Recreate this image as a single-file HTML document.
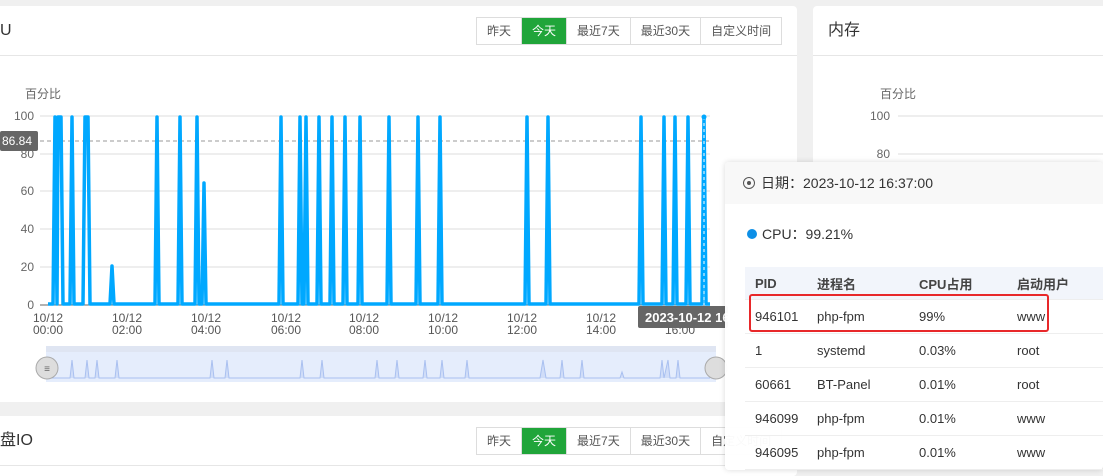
<!DOCTYPE html><html><head><meta charset="utf-8"><style>
body{margin:0;width:1103px;height:470px;background:#f0f0f0;font-family:"Liberation Sans","Noto Sans CJK SC",sans-serif;position:relative;overflow:hidden;color:#333}
.card{position:absolute;background:#fff;border-radius:4px}
.btns{position:absolute;display:flex;border:1px solid #ddd;height:26px;font-size:12px;color:#555}
.btns div{padding:0 10px;line-height:26px;border-left:1px solid #ddd}
.btns div:first-child{border-left:none}
.btns .on{background:#20a53a;color:#fff}
.t{position:absolute;font-size:16px;color:#333;line-height:20px}
.hr{position:absolute;height:1px;background:#e6e6e6}
.tip{position:absolute;left:725px;top:162px;width:378px;height:308px;background:rgba(255,255,255,.97);box-shadow:0 0 6px rgba(0,0,0,.15);border-radius:4px}
table{border-collapse:collapse;font-size:13px;color:#333;position:absolute;left:20px;top:105px;width:360px}
td,th{height:33px;padding:0 0 0 10px;text-align:left;border-bottom:1px solid #eee}
th{background:#f2f5fb;font-weight:bold;color:#444;height:32px}
</style></head><body>
<div class="card" style="left:-5px;top:6px;width:802px;height:396px"></div>
<div class="card" style="left:813px;top:6px;width:300px;height:396px"></div>
<div class="card" style="left:-5px;top:416px;width:802px;height:60px"></div>
<div class="t" style="left:0;top:21px">U</div>
<div class="hr" style="left:0;top:55px;width:797px"></div>
<div class="t" style="left:828px;top:21px">内存</div>
<div class="hr" style="left:813px;top:55px;width:290px"></div>
<div class="btns" style="left:476px;top:17px"><div>昨天</div><div class="on">今天</div><div>最近7天</div><div>最近30天</div><div>自定义时间</div></div>
<div class="t" style="left:0;top:431px">盘IO</div>
<div class="hr" style="left:0;top:465px;width:797px"></div>
<div class="btns" style="left:476px;top:427px"><div>昨天</div><div class="on">今天</div><div>最近7天</div><div>最近30天</div><div>自定义时间</div></div>
<svg style="position:absolute;left:0;top:0" width="1103" height="470" font-family="Liberation Sans,Noto Sans CJK SC,sans-serif" font-size="12" fill="#666">
<text x="25" y="98">百分比</text>
<g stroke="#ddd"><line x1="40" x2="710" y1="116" y2="116"/><line x1="40" x2="710" y1="154" y2="154"/><line x1="40" x2="710" y1="191" y2="191"/><line x1="40" x2="710" y1="229" y2="229"/><line x1="40" x2="710" y1="267" y2="267"/></g>
<line x1="40" x2="710" y1="305" y2="305" stroke="#666"/>
<g text-anchor="end"><text x="34" y="120">100</text><text x="34" y="158">80</text><text x="34" y="195">60</text><text x="34" y="233">40</text><text x="34" y="271">20</text><text x="34" y="309">0</text></g>
<line x1="40" x2="710" y1="141" y2="141" stroke="#999" stroke-dasharray="4,3"/>
<rect x="0" y="131" width="38" height="20" rx="2" fill="#666"/><text x="2" y="145" fill="#fff">86.84</text>
<g text-anchor="middle" fill="#555">
<text x="48" y="322">10/12</text><text x="48" y="334">00:00</text>
<text x="127" y="322">10/12</text><text x="127" y="334">02:00</text>
<text x="206" y="322">10/12</text><text x="206" y="334">04:00</text>
<text x="286" y="322">10/12</text><text x="286" y="334">06:00</text>
<text x="364" y="322">10/12</text><text x="364" y="334">08:00</text>
<text x="443" y="322">10/12</text><text x="443" y="334">10:00</text>
<text x="522" y="322">10/12</text><text x="522" y="334">12:00</text>
<text x="601" y="322">10/12</text><text x="601" y="334">14:00</text>
<text x="680" y="334">16:00</text></g>
<polyline fill="none" stroke="#00a8ff" stroke-width="3.5" stroke-linejoin="round" points="48,304 53,304 55,117 57,304 58,117 61,117 63,304 70,304 72,117 74,304 83,304 85,117 88,117 90,304 110,304 112,266 114,304 155,304 157,117 159,304 178,304 180,117 182,304 195,304 197,117 199,304 202,304 204,183 206,304 279,304 281,117 283,304 298,304 300,117 302,304 304,304 306,117 308,304 317,304 319,117 321,304 330,304 332,117 334,304 343,304 345,117 347,304 358,304 360,117 362,304 387,304 389,117 391,304 416,304 418,117 420,304 438,304 440,117 442,304 525,304 527,117 529,304 546,304 548,117 550,304 639,304 641,117 643,304 662,304 664,117 666,304 673,304 675,117 677,304 686,304 688,117 690,304 702,304 704,117 706,304 710,304"/>
<line x1="704" x2="704" y1="117" y2="305" stroke="#fff" stroke-dasharray="3,3"/>
<circle cx="704" cy="117" r="2.5" fill="#00a8ff"/>
<rect x="46" y="346" width="670" height="6" fill="#dfe5f2"/>
<rect x="46" y="352" width="670" height="30" fill="#e5edfc"/>
<polyline fill="#d0ddf8" stroke="#a9c0f0" points="50,378 70,378 72,360 74,378 85,378 87,360 89,378 95,378 97,360 99,378 115,378 117,360 119,378 210,378 212,360 214,378 225,378 227,360 229,378 300,378 302,360 304,378 320,378 322,360 324,378 375,378 377,360 379,378 395,378 397,360 399,378 423,378 425,360 427,378 440,378 442,360 444,378 465,378 467,360 469,378 540,378 543,360 546,378 560,378 562,360 564,378 580,378 582,360 584,378 620,378 622,372 624,378 660,378 662,360 664,378 668,360 670,378 676,378 678,360 680,378 710,378"/>
<circle cx="47" cy="368" r="11" fill="#ddd" stroke="#aaa"/><text x="47" y="372" text-anchor="middle" font-size="10">≡</text>
<circle cx="716" cy="368" r="11" fill="#ddd" stroke="#aaa"/>
<rect x="638" y="306" width="90" height="22" rx="2" fill="#666"/><text x="645" y="322" fill="#fff" font-weight="bold" font-size="13">2023-10-12 16:37</text>
<text x="880" y="98">百分比</text>
<text x="890" y="120" text-anchor="end">100</text><text x="890" y="158" text-anchor="end">80</text>
<line x1="898" x2="1103" y1="116" y2="116" stroke="#ddd"/><line x1="898" x2="1103" y1="154" y2="154" stroke="#ddd"/>
</svg>
<div class="tip">
<div style="height:42px;background:#f8f8f8;border-radius:4px 4px 0 0;font-size:14px;line-height:42px;padding-left:18px;color:#333"><span style="display:inline-block;width:10px;height:10px;border:1.5px solid #555;border-radius:50%;vertical-align:-1px;margin-right:6px;position:relative"><span style="position:absolute;left:3px;top:3px;width:4px;height:4px;background:#555;border-radius:50%"></span></span>日期：2023-10-12 16:37:00</div>
<div style="position:absolute;left:22px;top:62px;font-size:14px"><span style="display:inline-block;width:10px;height:10px;background:#0d8fe6;border-radius:50%;margin-right:5px"></span>CPU：99.21%</div>
<table>
<tr><th style="width:52px">PID</th><th style="width:92px">进程名</th><th style="width:88px">CPU占用</th><th>启动用户</th></tr>
<tr><td>946101</td><td>php-fpm</td><td>99%</td><td>www</td></tr>
<tr><td>1</td><td>systemd</td><td>0.03%</td><td>root</td></tr>
<tr><td>60661</td><td>BT-Panel</td><td>0.01%</td><td>root</td></tr>
<tr><td>946099</td><td>php-fpm</td><td>0.01%</td><td>www</td></tr>
<tr><td>946095</td><td>php-fpm</td><td>0.01%</td><td>www</td></tr>
</table>
<div style="position:absolute;left:24px;top:132px;width:296px;height:34px;border:2px solid #e8282a;border-radius:3px"></div>
</div>
</body></html>
